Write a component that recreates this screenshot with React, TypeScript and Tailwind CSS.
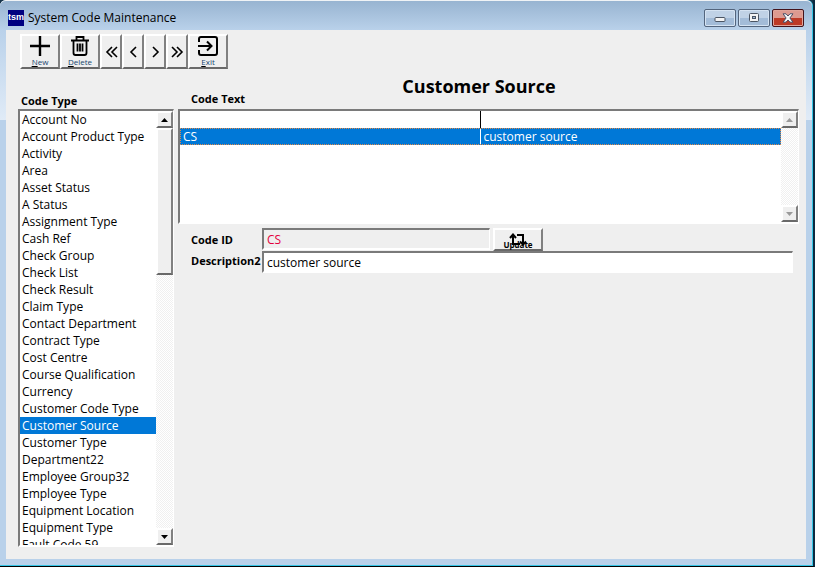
import { useState } from 'react';
import type { ReactNode } from 'react';

const codeTypes = [
  'Account No',
  'Account Product Type',
  'Activity',
  'Area',
  'Asset Status',
  'A Status',
  'Assignment Type',
  'Cash Ref',
  'Check Group',
  'Check List',
  'Check Result',
  'Claim Type',
  'Contact Department',
  'Contract Type',
  'Cost Centre',
  'Course Qualification',
  'Currency',
  'Customer Code Type',
  'Customer Source',
  'Customer Type',
  'Department22',
  'Employee Group32',
  'Employee Type',
  'Equipment Location',
  'Equipment Type',
  'Fault Code 59',
];

const raised =
  'border-2 border-t-white border-l-white border-r-[#808080] border-b-[#696969] bg-[#efefef]';
const sunken =
  'border-2 border-r border-t-[#7a7a7a] border-l-[#7a7a7a] border-r-white border-b-white';
const track =
  'bg-[repeating-conic-gradient(#f0f0f0_0_25%,#ffffff_0_50%)] bg-[length:2px_2px]';

function ToolButton({ label, children }: { label: string; children: ReactNode }) {
  return (
    <button className={`${raised} flex h-full w-10 flex-col items-center justify-between`}>
      {children}
      <span className="text-[8px] leading-[11px] text-[#17456e]">
        <span className="underline decoration-black">{label[0]}</span>
        {label.slice(1)}
      </span>
    </button>
  );
}

function NavButton({ label, points }: { label: string; points: string[] }) {
  return (
    <button aria-label={label} className={`${raised} flex h-full w-[22px] items-center justify-center`}>
      <svg viewBox="0 0 14 14" className="size-3.5 shrink-0" fill="none" stroke="#000" strokeWidth="1.6">
        {points.map((p) => (
          <polyline key={p} points={p} />
        ))}
      </svg>
    </button>
  );
}

function ScrollButton({ label, down, disabled }: { label: string; down?: boolean; disabled?: boolean }) {
  return (
    <button
      aria-label={label}
      disabled={disabled}
      className={`${raised} flex size-[17px] shrink-0 items-center justify-center`}
    >
      <svg viewBox="0 0 7 4" className="h-1 w-[7px]" fill={disabled ? '#9a9a9a' : '#000'}>
        <path d={down ? 'M0 0h7L3.5 4z' : 'M0 4h7L3.5 0z'} />
      </svg>
    </button>
  );
}

function TitleBar() {
  const glass =
    'flex h-[18px] w-8 items-center justify-center rounded-[2px] border border-[#53657d] bg-linear-to-b from-[#c0d2e6] from-50% to-[#a3bcd8] to-50% shadow-[inset_0_0_0_1px_#d5e3f2]';
  return (
    <header className="flex h-[30px] shrink-0 items-center gap-1 rounded-t-md border-t border-[#f0f3f6] bg-linear-to-b from-[#98b4d1] to-[#b9d1ea] pt-[5px] pr-2 pl-2">
      <span className="flex size-4 items-center justify-center overflow-hidden bg-[#000080] font-['Liberation_Sans',sans-serif] text-[9px] font-bold text-white">
        tsm
      </span>
      <h1 className="flex-1 text-[12px] leading-4">System Code Maintenance</h1>
      <div className="flex gap-0.5">
        <button aria-label="Minimize" className={glass}>
          <svg viewBox="0 0 12 10" className="h-2.5 w-3">
            <rect x="1" y="4.500" width="10" height="4" rx="1" fill="#f4f4f4" stroke="#4b5563" />
          </svg>
        </button>
        <button aria-label="Maximize" className={glass}>
          <svg viewBox="0 0 12 10" className="h-2.5 w-3">
            <rect x="1.5" y="0.5" width="9" height="8" rx="1" fill="#f4f4f4" stroke="#4b5563" />
            <rect x="4.5" y="3.5" width="3" height="2" fill="#a3bcd8" stroke="#4b5563" />
          </svg>
        </button>
        <button
          aria-label="Close"
          className="flex h-[18px] w-8 items-center justify-center rounded-[2px] border border-[#43131b] bg-linear-to-b from-[#dd9a90] from-50% to-[#bd3a26] to-50% shadow-[inset_0_0_0_1px_#e0a59b]"
        >
          <svg viewBox="0 0 12 10" className="h-2.5 w-3">
            <path
              d="M1 .8h3L6 3l2-2.200h3L7.900 5 11 9.200H8L6 7 4 9.200H1L4.100 5z"
              fill="#f7f7f7"
              stroke="#4a4f66"
            />
          </svg>
        </button>
      </div>
    </header>
  );
}

function Toolbar() {
  return (
    <div role="toolbar" className="ml-0.5 flex h-[35px] shrink-0">
      <ToolButton label="New">
        <svg viewBox="0 0 20 20" className="size-5" stroke="#000" strokeWidth="2.4">
          <path d="M10 0v20M0 10h20" />
        </svg>
      </ToolButton>
      <ToolButton label="Delete">
        <svg viewBox="0 0 18 20" className="h-5 w-[18px]" fill="none" stroke="#000" strokeWidth="1.8">
          <path d="M0 4.500h18M5.500 4V1h7v3M2.500 5v12q0 2 2 2h9q2 0 2-2V5M6.500 7.500v8M9 7.500v8M11.500 7.500v8" />
        </svg>
      </ToolButton>
      <NavButton label="First" points={['8,2 3,7 8,12', '13,2 8,7 13,12']} />
      <NavButton label="Previous" points={['10,2 5,7 10,12']} />
      <NavButton label="Next" points={['5,2 10,7 5,12']} />
      <NavButton label="Last" points={['2,2 7,7 2,12', '7,2 12,7 7,12']} />
      <ToolButton label="Exit">
        <svg viewBox="0 0 20 20" className="size-5" fill="none" stroke="#000" strokeWidth="2">
          <path d="M1 6V3q0-2 2-2h14q2 0 2 2v14q0 2-2 2H3q-2 0-2-2v-3M0 10h13M9 5.500l4.500 4.500L9 14.500" />
        </svg>
      </ToolButton>
    </div>
  );
}

export default function App() {
  const [selected, setSelected] = useState('Customer Source');
  const [description, setDescription] = useState('customer source');

  return (
    <div className="flex h-screen flex-col overflow-hidden border-r-2 border-b border-r-[#0b2a40] border-b-black bg-[#16344a] font-['Open_Sans','Noto_Sans',sans-serif] text-[12px] text-black">
      <div className="flex min-h-0 flex-1 flex-col rounded-t-md border-r border-b border-[#35c5e6] bg-[#b9d1ea]">
        <TitleBar />
        <div className="flex min-h-0 flex-1 bg-[linear-gradient(to_bottom,#b9d1ea_0,#e0ebf7_90px,#b9d1ea_90px)] px-1.5 pb-1.5">
          <main className="flex min-w-0 flex-1 flex-col bg-[#efefef] pt-1 pr-[7px] pb-3 pl-3">
            <Toolbar />
            <div className="flex min-h-0 flex-1 gap-1">
              <section className="flex w-[156px] shrink-0 flex-col">
                <h2 id="code-type" className="flex h-10 shrink-0 items-end pl-[3px] text-[11px] leading-4 font-bold">
                  Code Type
                </h2>
                <div className={`${sunken} flex min-h-0 flex-1 bg-white`}>
                  <ul role="listbox" aria-labelledby="code-type" className="min-w-0 flex-1 overflow-hidden">
                    {codeTypes.map((type) => (
                      <li key={type} role="option" aria-selected={type === selected}>
                        <button
                          onClick={() => setSelected(type)}
                          className={`block w-full pl-0.5 text-left leading-[17px] whitespace-nowrap ${
                            type === selected ? 'bg-[#0078d7] text-white' : ''
                          }`}
                        >
                          {type}
                        </button>
                      </li>
                    ))}
                  </ul>
                  <div className={`${track} flex w-[17px] shrink-0 flex-col`}>
                    <ScrollButton label="Scroll up" />
                    <div className={`${raised} h-[147px]`} />
                    <div className="flex-1" />
                    <ScrollButton label="Scroll down" down />
                  </div>
                </div>
              </section>

              <section className="flex min-w-0 flex-1 flex-col">
                <div className="grid h-10 shrink-0 grid-cols-[1fr_auto_1fr] pr-8 pl-[13px]">
                  <h3 className="self-end pb-0.5 text-[11px] leading-4 font-bold">Code Text</h3>
                  <h2 className="pt-[5px] text-[18px] leading-6 font-bold">{selected}</h2>
                </div>
                <div className={`${sunken} flex h-[115px] shrink-0 bg-white`}>
                  <div className="min-w-0 flex-1">
                    <table className="w-full table-fixed border-separate border-spacing-0 leading-[17px]">
                      <tbody>
                        <tr className="h-[17px]">
                          <td className="border-r border-black p-0" />
                          <td className="p-0" />
                        </tr>
                        <tr className="h-[17px] bg-[#0078d7] text-white outline-1 -outline-offset-1 outline-[#e08a4a] outline-dotted">
                          <td className="border-r border-white p-0 pl-[3px]">CS</td>
                          <td className="p-0 pl-[3px]">customer source</td>
                        </tr>
                      </tbody>
                    </table>
                  </div>
                  <div className={`${track} flex w-[17px] shrink-0 flex-col justify-between`}>
                    <ScrollButton label="Scroll up" disabled />
                    <ScrollButton label="Scroll down" down disabled />
                  </div>
                </div>

                <form className="mt-1 pr-1.5 pl-[13px]" onSubmit={(e) => e.preventDefault()}>
                  <div className="flex">
                    <label htmlFor="code-id" className="w-[71px] shrink-0 self-end text-[11px] leading-[22px] font-bold">
                      Code ID
                    </label>
                    <input
                      id="code-id"
                      readOnly
                      value="CS"
                      className={`${sunken} mr-[3px] h-[22px] w-[228px] bg-[#efefef] pl-[3px] text-[#e4003c]`}
                    />
                    <button className={`${raised} grid h-[23px] w-[50px] place-items-center text-[8px] leading-2 font-bold`}>
                      <svg viewBox="0 0 18 14" className="col-start-1 row-start-1 h-3.5 w-[18px]" fill="none" stroke="#000" strokeWidth="2">
                        <path d="M4 2v9h7M1 5l3-3.500L7 5M8 2h6v9M11 8.500l3 3 3-3" />
                      </svg>
                      <span className="col-start-1 row-start-1 self-end">Update</span>
                    </button>
                  </div>
                  <div className="flex">
                    <label htmlFor="description" className="w-[71px] shrink-0 text-[11px] leading-5 font-bold">
                      Description2
                    </label>
                    <input
                      id="description"
                      value={description}
                      onChange={(e) => setDescription(e.target.value)}
                      className={`${sunken} h-[22px] min-w-0 flex-1 bg-white pl-[3px]`}
                    />
                  </div>
                </form>
              </section>
            </div>
          </main>
        </div>
      </div>
    </div>
  );
}
